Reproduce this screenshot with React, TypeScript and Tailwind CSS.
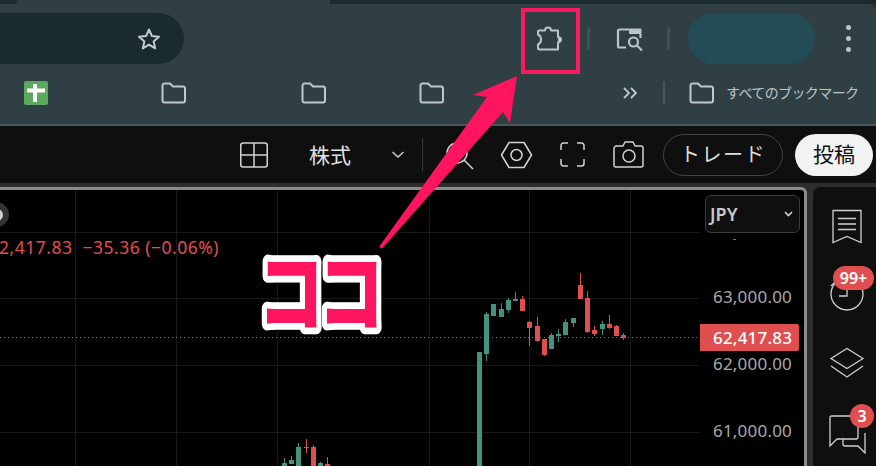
import React from "react";

const RED = "#e04f50";
const GREEN = "#429480";
type C = [number, number, number, number, number, number, string];
const main: C[] = [
  [51,66,276,618,276,618,GREEN],[72,87,162,282,156,303,GREEN],[93,108,132,168,132,168,GREEN],
  [117,132,147,171,129,171,GREEN],[138,153,120,150,114,159,GREEN],[159,174,117,123,96,123,GREEN],
  [180,195,117,153,108,153,RED],[201,216,186,204,183,258,RED],[225,240,198,243,171,246,RED],
  [246,261,237,285,237,288,RED],[267,282,225,267,219,267,GREEN],[288,303,222,228,207,246,GREEN],
  [309,324,186,225,177,225,GREEN],[333,348,174,189,174,201,GREEN],[354,369,75,117,39,117,RED],
  [375,390,114,216,93,219,RED],[396,411,210,222,198,228,RED],[420,435,192,207,183,225,GREEN],
  [441,456,192,204,165,207,RED],[462,477,198,228,195,228,RED],[483,498,225,234,219,240,RED],
];
const lower: C[] = [
  [126,141,819,828,804,828,GREEN],[147,162,810,822,798,822,GREEN],[168,183,771,828,759,828,GREEN],
  [192,207,771,774,747,789,RED],[213,228,771,828,765,828,RED],[234,249,819,828,816,828,GREEN],
  [255,270,822,828,801,828,RED],
];

function Candles({ data, ox, oy }: { data: C[]; ox: number; oy: number }) {
  return (
    <>
      {data.map(([a, b, t, u, wt, wb, c], i) => {
        const x = ox + a / 3, w = (b - a) / 3, y = oy + t / 3, h = (u - t) / 3;
        const mid = x + w / 2 - 0.5;
        return (
          <g key={i} fill={c}>
            <rect x={mid} y={oy + wt / 3} width={1} height={(wb - wt) / 3} />
            <rect x={x} y={y} width={w} height={h} />
          </g>
        );
      })}
    </>
  );
}

const Folder = ({ className = "" }: { className?: string }) => (
  <svg width="26" height="22" viewBox="0 0 26 22" fill="none" stroke="#c2c8ca" strokeWidth="2" className={className}>
    <path d="M1.500 3.500a2 2 0 0 1 2-2h5.500l3 3h10a2 2 0 0 1 2 2v12a2 2 0 0 1-2 2h-18.500a2 2 0 0 1-2-2z" />
  </svg>
);

const Price = ({ top, children }: { top: string; children: string }) => (
  <span className={`absolute left-[713px] ${top} text-[17px] leading-[20px] tracking-[0.2px] text-[#a9a9a9]`}>{children}</span>
);

export default function App() {
  return (
    <div className="relative flex h-[466px] w-[876px] flex-col overflow-hidden bg-[#2e2e2e] [font-family:'Noto_Sans','Noto_Sans_CJK_JP',sans-serif]">
      {/* window strip */}
      <div className="flex h-[4px] shrink-0 bg-[#1a2b30]">
        <div className="ml-[17px] w-[313px] bg-[#303f44]" />
      </div>

      {/* browser toolbar */}
      <div className="flex h-[60px] shrink-0 items-center rounded-tr-[8px] bg-[#303f44] pt-[9px]">
        <div className="flex h-[51px] w-[184px] items-center justify-end rounded-r-full bg-[#1a2b30] pr-[23px]">
          <svg width="24" height="24" viewBox="0 0 24 24" fill="none" stroke="#c4cacc" strokeWidth="2" strokeLinejoin="round">
            <path d="m12 2.500 2.900 6.600 7.100.6-5.400 4.700 1.600 7-6.200-3.700-6.200 3.700 1.600-7L2 9.700l7.100-.6z" />
          </svg>
        </div>
        <svg className="ml-[352px]" width="26" height="26" viewBox="0 0 26 26" fill="none" stroke="#b9c5ca" strokeWidth="2" strokeLinejoin="round">
          <path d="M3 4.500H9a3 3 0 0 1 6 0H22V11a2.800 2.800 0 0 1 0 5.500V23.500H3.500a1.500 1.500 0 0 1-1.500-1.500V18.500c2.500-1 3-3 3-5s-.5-4-3-5V5.500a1 1 0 0 1 1-1z" />
          <path d="M23 11.500a2 2 0 0 1 0 4z" fill="#b9c5ca" />
        </svg>
        <div className="ml-[25px] h-[23px] w-[3px] rounded-full bg-[#445258]" />
        <svg className="ml-[26px]" width="28" height="26" viewBox="0 0 28 26" fill="none" stroke="#b9c5ca" strokeWidth="2.200">
          <path d="M10 21.500H3.500a1.500 1.500 0 0 1-1.500-1.500V5a1.500 1.500 0 0 1 1.500-1.500H13" />
          <rect x="13" y="2.500" width="12.500" height="5.500" rx="1" fill="#b9c5ca" stroke="none" />
          <path d="M24.500 8v4" />
          <circle cx="17.500" cy="16" r="4.500" />
          <path d="m21 19.500 5 5" />
        </svg>
        <div className="ml-[23px] h-[23px] w-[3px] rounded-full bg-[#445258]" />
        <div className="ml-[18px] h-[51px] w-[127px] rounded-full bg-[#234c56]" />
        <div className="ml-[31px] flex flex-col gap-[6px]">
          <span className="size-[5px] rounded-full bg-[#b9c5ca]" />
          <span className="size-[5px] rounded-full bg-[#b9c5ca]" />
          <span className="size-[5px] rounded-full bg-[#b9c5ca]" />
        </div>
      </div>

      {/* bookmarks bar */}
      <div className="flex h-[62px] shrink-0 items-center border-b-[2px] border-[#4a565a] bg-[#303f44] pb-[3px]">
        <div className="ml-[24px] flex size-[24px] items-center justify-center rounded-[2px] bg-[#5ba85f]">
          <svg width="18" height="18" viewBox="0 0 18 18" fill="#ffffff"><rect x="0" y="4.500" width="18" height="4" /><rect x="6" y="0" width="4" height="18" /></svg>
        </div>
        <Folder className="ml-[113px]" />
        <Folder className="ml-[114px]" />
        <Folder className="ml-[92px]" />
        <svg className="ml-[177px]" width="16" height="14" viewBox="0 0 16 14" fill="none" stroke="#c2c8ca" strokeWidth="1.800"><path d="m2 2 5 5-5 5M9 2l5 5-5 5" /></svg>
        <div className="ml-[25px] h-[24px] w-[2px] rounded-full bg-[#4a585d]" />
        <Folder className="ml-[24px]" />
        <span className="ml-[11px] whitespace-nowrap text-[14px] leading-[20px] tracking-[-0.6px] text-[#bcc6c9]">すべてのブックマーク</span>
      </div>

      {/* app top bar */}
      <div className="flex h-[57px] shrink-0 items-center bg-[#0f0f0f] text-[#e3e3e3]">
        <svg className="ml-[240px]" width="28" height="26" viewBox="0 0 28 26" fill="none" stroke="#d2d2d2" strokeWidth="1.500">
          <rect x="0.750" y="1" width="26.500" height="24" rx="2.500" /><path d="M14 1v24M.75 13h26.500" />
        </svg>
        <span className="ml-[41px] text-[21px] leading-[28px]">株式</span>
        <svg className="ml-[40px]" width="14" height="8" viewBox="0 0 14 8" fill="none" stroke="#cfcfcf" strokeWidth="1.500"><path d="m1.500 1 5.500 5 5.500-5" /></svg>
        <div className="ml-[17px] h-[33px] w-px bg-[#3a3a3a]" />
        <svg className="ml-[21px]" width="30" height="30" viewBox="0 0 30 30" fill="none" stroke="#d2d2d2" strokeWidth="1.500">
          <circle cx="13" cy="13" r="10" /><path d="m20 20 9 9" />
        </svg>
        <svg className="ml-[26px]" width="33" height="28" viewBox="0 0 33 28" fill="none" stroke="#d2d2d2" strokeWidth="1.500">
          <path d="M9 1.500h15L31.500 14 24 26.500H9L1.500 14z" strokeLinejoin="round" /><circle cx="16.500" cy="14" r="5.500" />
        </svg>
        <svg className="ml-[27px]" width="25" height="25" viewBox="0 0 25 25" fill="none" stroke="#d2d2d2" strokeWidth="1.500">
          <path d="M1 8V3.500A2.500 2.500 0 0 1 3.500 1H8M17 1h4.500A2.500 2.500 0 0 1 24 3.500V8M24 17v4.500a2.500 2.500 0 0 1-2.500 2.500H17M8 24H3.500A2.500 2.500 0 0 1 1 21.500V17" />
        </svg>
        <svg className="ml-[28px]" width="32" height="27" viewBox="0 0 32 27" fill="none" stroke="#d2d2d2" strokeWidth="1.500">
          <path d="M3.500 5H10l2-4h8l2 4h6a2 2 0 0 1 2 2v17a2 2 0 0 1-2 2H3a2 2 0 0 1-2-2V7.500A2.500 2.500 0 0 1 3.500 5z" strokeLinejoin="round" /><circle cx="16" cy="15" r="6" />
        </svg>
        <div className="ml-[18px] flex h-[42px] w-[120px] items-center justify-center rounded-full border border-[#434343] text-[20px] tracking-[1.500px] text-[#dcdcdc]">トレード</div>
        <div className="ml-[12px] flex h-[42px] w-[78px] items-center justify-center rounded-full bg-[#f2f2f2] text-[21px] text-[#0f0f0f]">投稿</div>
      </div>

      {/* workspace */}
      <div className="flex min-h-0 flex-1 pt-[4px]">
        <div className="relative h-full w-[807px] overflow-hidden rounded-tr-[6px] border-t-[3px] border-r-[3px] border-[#8c8c8c] bg-black">
          <svg className="absolute left-0 top-0" width="804" height="276" viewBox="0 190 804 276">
            <g fill="#191919">
              {[75, 176, 277, 429, 529, 630].map((x) => <rect key={x} x={x} y={190} width={1} height={276} />)}
              {[232, 298, 365, 432].map((y) => <rect key={y} x={0} y={y} width={699} height={1} />)}
            </g>
            <path d="M0 337.500H700" stroke={RED} strokeWidth="1" strokeDasharray="1 3" />
            <Candles data={main} ox={460} oy={260} />
            <Candles data={lower} ox={240} oy={190} />
            <rect x="733" y="239" width="3" height="1" fill="#777" />
          </svg>

          <div className="absolute -left-[16px] top-[12px] flex size-[25px] items-center justify-center rounded-full bg-[#333333]">
            <span className="size-[12px] rounded-full bg-[#cfcfcf]" />
          </div>
          <span className="absolute -left-[1px] top-[45px] whitespace-nowrap text-[17.500px] leading-[24px] tracking-[0.5px] text-[#e04f50]">2,417.83 &nbsp;−35.36 (−0.06%)</span>

          <div className="absolute left-[705px] top-[5px] flex h-[38px] w-[95px] items-center justify-between rounded-[6px] border border-[#3a3a3a] bg-[#0f0f0f] pl-[4px] pr-[6px] text-[18px] font-semibold text-[#c8c8c8]">
            JPY
            <svg width="9" height="6" viewBox="0 0 9 6" fill="none" stroke="#d5d5d5" strokeWidth="1.600"><path d="m1 1 3.500 3.500L8 1" /></svg>
          </div>

          <Price top="top-[97px]">63,000.00</Price>
          <Price top="top-[164px]">62,000.00</Price>
          <Price top="top-[231px]">61,000.00</Price>
          <div className="absolute left-[700px] top-[134px] flex h-[27px] w-[99px] items-center rounded-r-[2px] bg-[#e04f50] pl-[13px] text-[17px] font-medium leading-[20px] tracking-[0.2px] text-white">62,417.83</div>
        </div>

        <div className="relative ml-[6px] flex-1 rounded-tl-[8px] bg-[#0f0f0f]">
          <div className="flex flex-col items-center pl-[5px] pt-[22px]">
            <svg width="32" height="35" viewBox="0 0 32 35" fill="none" stroke="#cfcfcf" strokeWidth="1.300">
              <path d="M2 1.500h28v32l-14-6-14 6z" /><path d="M7 9.500h18M7 15h18M7 20.500h18" />
            </svg>
            <svg className="mt-[29px]" width="36" height="38" viewBox="0 0 36 38" fill="none" stroke="#cfcfcf" strokeWidth="1.300">
              <circle cx="18" cy="21" r="16" /><path d="M18 13v10h-8M2 13l5-5" />
            </svg>
            <svg className="mt-[36px]" width="36" height="32" viewBox="0 0 36 32" fill="none" stroke="#cfcfcf" strokeWidth="1.300">
              <path d="M18 1.500 34 11.500 18 21.500 2 11.500z" /><path d="m2 19 16 11 16-11" />
            </svg>
            <svg className="mt-[33px]" width="38" height="42" viewBox="0 0 38 42" fill="none" stroke="#cfcfcf" strokeWidth="1.300">
              <path d="M30 26V6a2 2 0 0 0-2-2H3a2 2 0 0 0-1 2v28l7-7h19a2 2 0 0 0 2-2z" /><path d="M15 27v5a2 2 0 0 0 2 2h13l7 7V21" />
            </svg>
          </div>
          <span className="absolute left-[20px] top-[79px] flex h-[24px] w-[41px] items-center justify-center rounded-full bg-[#e04f50] text-[16px] font-semibold leading-none text-white">99+</span>
          <span className="absolute left-[37px] top-[217px] flex size-[24px] items-center justify-center rounded-full bg-[#e04f50] text-[16px] font-semibold leading-none text-white">3</span>
        </div>
      </div>

      {/* annotations */}
      <div className="pointer-events-none absolute left-[521px] top-[8px] h-[66px] w-[59px] border-[4px] border-[#fa1a62]" />
      <svg className="pointer-events-none absolute inset-0" width="876" height="466" viewBox="0 0 876 466">
        <path d="M517 76 473 95 487 97 380 245.500a1.800 1.800 0 0 0 3 2L503 112 510 123z" fill="#ff1460" />
        <g transform="translate(258 325) scale(1 1.32)" fontSize="66" fontWeight="900" fontFamily="'Noto Sans CJK JP',sans-serif" fill="#ff1460" stroke="#ffffff" strokeWidth="12" strokeLinejoin="round" style={{ paintOrder: "stroke fill" }}>
          <text x="0" y="0" letterSpacing="-6" style={{ vectorEffect: "non-scaling-stroke" }}>ココ</text>
        </g>
      </svg>
    </div>
  );
}
